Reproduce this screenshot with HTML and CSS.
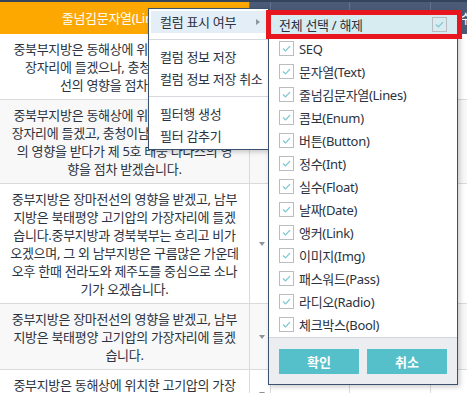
FILE: index.html
```html
<!DOCTYPE html>
<html lang="ko">
<head>
<meta charset="utf-8">
<title>그리드 컬럼 메뉴</title>
<link rel="stylesheet" href="styles.css">
</head>
<body>
<div class="grid">
  <div class="head">
    <div class="hcell h-lines">줄넘김문자열(Lines)</div>
    <div class="hcell h-dark"></div>
    <div class="hcell h-dark">콤보(Enum)</div>
    <div class="hcell h-dark">정수(Int)</div>
    <div class="hcell h-dark h-last">실수(Float)</div>
  </div>
  <div class="row">
    <div class="cell txt">중북부지방은 동해상에 위치한 고기압의 가<br>장자리에 들겠으나, 충청이남은 장마전<br>선의 영향을 점차 받겠음.</div>
    <div class="cell combo"><span class="arrow"></span></div>
    <div class="cell"></div><div class="cell"></div><div class="cell"></div>
  </div>
  <div class="row alt">
    <div class="cell txt">중북부지방은 동해상에 위치한 고기압의 가<br>장자리에 들겠고, 충청이남은 다시 장마전선<br>의 영향을 받다가 제 5호 태풍 다나스의 영<br>향을 점차 받겠습니다.</div>
    <div class="cell combo"><span class="arrow"></span></div>
    <div class="cell"></div><div class="cell"></div><div class="cell"></div>
  </div>
  <div class="row">
    <div class="cell txt">중부지방은 장마전선의 영향을 받겠고, 남부<br>지방은 북태평양 고기압의 가장자리에 들겠<br>습니다.중부지방과 경북북부는 흐리고 비가<br>오겠으며, 그 외 남부지방은 구름많은 가운데<br>오후 한때 전라도와 제주도를 중심으로 소나<br>기가 오겠습니다.</div>
    <div class="cell combo"><span class="arrow"></span></div>
    <div class="cell"></div><div class="cell"></div><div class="cell"></div>
  </div>
  <div class="row alt">
    <div class="cell txt">중부지방은 장마전선의 영향을 받겠고, 남부<br>지방은 북태평양 고기압의 가장자리에 들겠<br>습니다.</div>
    <div class="cell combo"><span class="arrow"></span></div>
    <div class="cell"></div><div class="cell"></div><div class="cell"></div>
  </div>
  <div class="row">
    <div class="cell txt">중부지방은 동해상에 위치한 고기압의 가장<br>자리에 들겠습니다.</div>
    <div class="cell combo"><span class="arrow"></span></div>
    <div class="cell"></div><div class="cell"></div><div class="cell"></div>
  </div>
</div>

<div class="ctx">
  <div class="ctx-item on">컬럼 표시 여부<span class="sub-arrow"></span></div>
  <div class="ctx-sep"></div>
  <div class="ctx-item">컬럼 정보 저장</div>
  <div class="ctx-item">컬럼 정보 저장 취소</div>
  <div class="ctx-sep"></div>
  <div class="ctx-item">필터행 생성</div>
  <div class="ctx-item">필터 감추기</div>
</div>

<div class="sub">
  <div class="sub-all">전체 선택 / 해제<span class="chk chk-all"><svg viewBox="0 0 15 15"><polyline points="3.5,7.5 6.3,10.3 11.5,4.8"/></svg></span></div>
  <div class="sub-list">
    <div class="sub-item"><span class="chk"><svg viewBox="0 0 15 15"><polyline points="3.5,7.5 6.3,10.3 11.5,4.8"/></svg></span>SEQ</div>
    <div class="sub-item"><span class="chk"><svg viewBox="0 0 15 15"><polyline points="3.5,7.5 6.3,10.3 11.5,4.8"/></svg></span>문자열(Text)</div>
    <div class="sub-item"><span class="chk"><svg viewBox="0 0 15 15"><polyline points="3.5,7.5 6.3,10.3 11.5,4.8"/></svg></span>줄넘김문자열(Lines)</div>
    <div class="sub-item"><span class="chk"><svg viewBox="0 0 15 15"><polyline points="3.5,7.5 6.3,10.3 11.5,4.8"/></svg></span>콤보(Enum)</div>
    <div class="sub-item"><span class="chk"><svg viewBox="0 0 15 15"><polyline points="3.5,7.5 6.3,10.3 11.5,4.8"/></svg></span>버튼(Button)</div>
    <div class="sub-item"><span class="chk"><svg viewBox="0 0 15 15"><polyline points="3.5,7.5 6.3,10.3 11.5,4.8"/></svg></span>정수(Int)</div>
    <div class="sub-item"><span class="chk"><svg viewBox="0 0 15 15"><polyline points="3.5,7.5 6.3,10.3 11.5,4.8"/></svg></span>실수(Float)</div>
    <div class="sub-item"><span class="chk"><svg viewBox="0 0 15 15"><polyline points="3.5,7.5 6.3,10.3 11.5,4.8"/></svg></span>날짜(Date)</div>
    <div class="sub-item"><span class="chk"><svg viewBox="0 0 15 15"><polyline points="3.5,7.5 6.3,10.3 11.5,4.8"/></svg></span>앵커(Link)</div>
    <div class="sub-item"><span class="chk"><svg viewBox="0 0 15 15"><polyline points="3.5,7.5 6.3,10.3 11.5,4.8"/></svg></span>이미지(Img)</div>
    <div class="sub-item"><span class="chk"><svg viewBox="0 0 15 15"><polyline points="3.5,7.5 6.3,10.3 11.5,4.8"/></svg></span>패스워드(Pass)</div>
    <div class="sub-item"><span class="chk"><svg viewBox="0 0 15 15"><polyline points="3.5,7.5 6.3,10.3 11.5,4.8"/></svg></span>라디오(Radio)</div>
    <div class="sub-item"><span class="chk"><svg viewBox="0 0 15 15"><polyline points="3.5,7.5 6.3,10.3 11.5,4.8"/></svg></span>체크박스(Bool)</div>
  </div>
  <div class="sub-foot">
    <button class="btn">확인</button>
    <button class="btn">취소</button>
  </div>
</div>

<div class="mark"></div>
</body>
</html>
```

FILE: styles.css
```css
* { box-sizing: border-box; }

html, body {
  margin: 0;
  padding: 0;
  width: 467px;
  height: 393px;
  overflow: hidden;
  background: #ffffff;
}

body {
  position: relative;
  font-family: "Noto Sans", "Noto Sans CJK KR", sans-serif;
  font-size: 13px;
  letter-spacing: -0.3px;
  color: #2b3240;
}

.grid {
  width: 467px;
  border-top: 2px solid #34445c;
}

.head,
.row {
  display: grid;
  grid-template-columns: 249px 21px 79px 81px 1fr;
}

.head {
  height: 32px;
}

.hcell {
  color: #ffffff;
  font-size: 13px;
  line-height: 32px;
  white-space: nowrap;
  overflow: hidden;
}

.h-lines {
  background: #fca800;
  text-align: center;
  padding-right: 18px;
}

.h-dark {
  background: #4a5b77;
  border-left: 1px solid #63728e;
  text-align: center;
}

.h-last {
  text-align: left;
  padding-left: 17px;
}

.row {
  border-bottom: 1px solid #d8dadd;
  background: #ffffff;
}

.row.alt {
  background: #f8f8f8;
}

.cell {
  border-left: 1px solid #d8dadd;
}

.cell.txt {
  border-left: none;
  padding: 6px 0 5px;
  line-height: 18px;
  text-align: center;
  white-space: nowrap;
  overflow: hidden;
}

.cell.combo {
  display: flex;
  align-items: center;
  justify-content: flex-end;
  padding-right: 5px;
}

.arrow {
  width: 0;
  height: 0;
  border-left: 3px solid transparent;
  border-right: 3px solid transparent;
  border-top: 4px solid #8d939b;
}

/* context menu */
.ctx {
  position: absolute;
  left: 148px;
  top: 8px;
  width: 121px;
  padding: 2px;
  background: #ffffff;
  border: 1px solid #3b5170;
  box-shadow: 2px 2px 5px rgba(0, 0, 0, 0.2);
  z-index: 2;
}

.ctx-item {
  height: 22px;
  line-height: 22px;
  padding-left: 9px;
  white-space: nowrap;
  display: flex;
  align-items: center;
  justify-content: space-between;
}

.ctx-item.on {
  background: #e4eef7;
}

.sub-arrow {
  width: 0;
  height: 0;
  margin-right: 6px;
  border-top: 3.5px solid transparent;
  border-bottom: 3.5px solid transparent;
  border-left: 4px solid #8f959c;
}

.ctx-sep {
  height: 1px;
  margin: 6px -2px;
  background: #d6dadf;
}

/* sub menu */
.sub {
  position: absolute;
  left: 268px;
  top: 10px;
  width: 190px;
  background: #ffffff;
  border: 1px solid #3b5170;
  box-shadow: 2px 2px 5px rgba(0, 0, 0, 0.2);
  z-index: 3;
}

.sub-all {
  height: 26px;
  padding: 0 10px;
  background: #d6ecf1;
  display: flex;
  align-items: center;
  justify-content: space-between;
  white-space: nowrap;
}

.sub-list {
  padding-bottom: 1px;
}

.sub-item {
  height: 23px;
  padding-left: 10px;
  display: flex;
  align-items: center;
  gap: 5px;
  white-space: nowrap;
}

.chk {
  width: 15px;
  height: 15px;
  flex: none;
  border: 1px solid #b9bdc2;
  background: #ffffff;
  display: flex;
}

.chk-all {
  background: transparent;
}

.chk svg {
  width: 13px;
  height: 13px;
}

.chk polyline {
  fill: none;
  stroke: #80c7cf;
  stroke-width: 1.5;
}

.sub-foot {
  border-top: 1px solid #d2d6dc;
  background: #ebedf1;
  padding: 11px 10px 10px;
  display: flex;
  gap: 8px;
}

.btn {
  width: 80px;
  height: 25px;
  border: none;
  background: #55bfca;
  color: #ffffff;
  font-family: inherit;
  font-size: 13px;
  font-weight: bold;
  letter-spacing: 0;
  padding: 0;
}

.mark {
  position: absolute;
  left: 266px;
  top: 10px;
  width: 196px;
  height: 29px;
  border: 5px solid #e8161f;
  z-index: 4;
}
```
